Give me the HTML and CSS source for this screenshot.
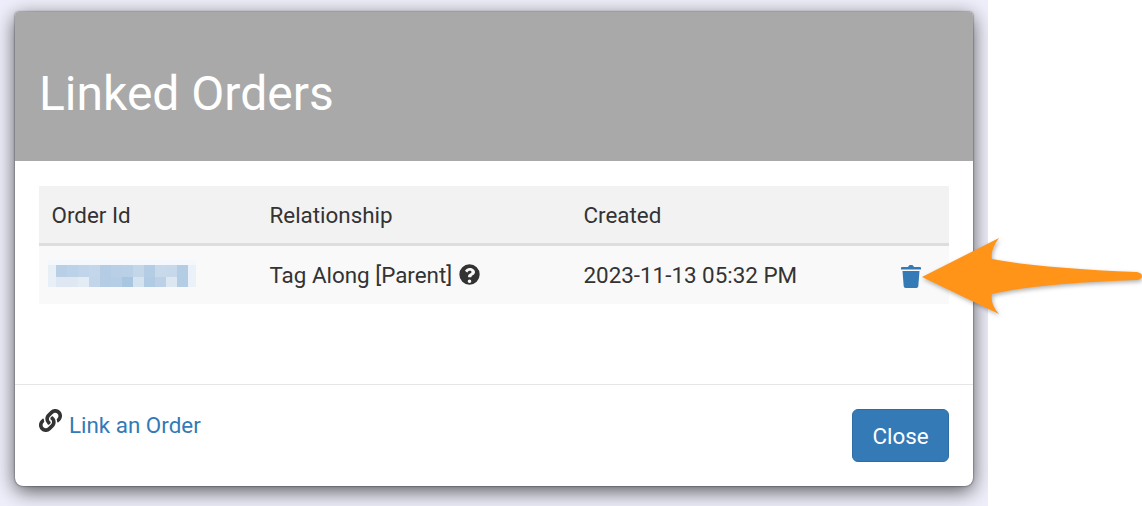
FILE: index.html
```html
<!DOCTYPE html>
<html lang="en">
<head>
  <meta charset="UTF-8" />
  <meta name="viewport" content="width=device-width, initial-scale=1.0"/>
  <title>Linked Orders</title>
  <link rel="stylesheet" href="styles.css">
</head>
<body>

<div class="backdrop">
  <div class="modal">
    <div class="modal-header">
      <h1>Linked Orders</h1>
    </div>

    <div class="modal-body">
      <table class="orders">
        <thead>
          <tr>
            <th class="col-id">Order Id</th>
            <th class="col-rel">Relationship</th>
            <th class="col-created">Created</th>
            <th class="col-action"></th>
          </tr>
        </thead>
        <tbody>
          <tr>
            <td>
              <!-- pixelated order number -->
              <svg class="redacted" viewBox="0 0 148 27" shape-rendering="crispEdges">
                <rect width="148" height="27" fill="#f4f7fb"/>
                <rect x="0" y="5" width="8" height="22" fill="#e8eff7"/>
                <rect x="140" y="5" width="8" height="22" fill="#ebf1f8"/>
                <rect x="8" y="5" width="11" height="12" fill="#b8cfe6"/>
                <rect x="19" y="5" width="11" height="12" fill="#bcd2e8"/>
                <rect x="30" y="5" width="11" height="12" fill="#c0d4ea"/>
                <rect x="41" y="5" width="11" height="12" fill="#c4d7ea"/>
                <rect x="52" y="5" width="11" height="12" fill="#b4cce4"/>
                <rect x="63" y="5" width="11" height="12" fill="#b8cfe6"/>
                <rect x="74" y="5" width="11" height="12" fill="#bad0e6"/>
                <rect x="85" y="5" width="11" height="12" fill="#c4d7e9"/>
                <rect x="96" y="5" width="11" height="12" fill="#b4cde5"/>
                <rect x="107" y="5" width="11" height="12" fill="#c8d9ea"/>
                <rect x="118" y="5" width="11" height="12" fill="#c6d8ea"/>
                <rect x="129" y="5" width="11" height="12" fill="#b4cde5"/>
                <rect x="8" y="17" width="11" height="10" fill="#dfe8f2"/>
                <rect x="19" y="17" width="11" height="10" fill="#dfe8f2"/>
                <rect x="30" y="17" width="11" height="10" fill="#e3ebf4"/>
                <rect x="41" y="17" width="11" height="10" fill="#c3d6e9"/>
                <rect x="52" y="17" width="11" height="10" fill="#b4cce4"/>
                <rect x="63" y="17" width="11" height="10" fill="#b6cee5"/>
                <rect x="74" y="17" width="11" height="10" fill="#a9c6e0"/>
                <rect x="85" y="17" width="11" height="10" fill="#d5e2ef"/>
                <rect x="96" y="17" width="11" height="10" fill="#b2cbe4"/>
                <rect x="107" y="17" width="11" height="10" fill="#bcd1e7"/>
                <rect x="118" y="17" width="11" height="10" fill="#dce7f1"/>
                <rect x="129" y="17" width="11" height="10" fill="#b4cde5"/>
              </svg>
            </td>
            <td>
              Tag Along [Parent]
              <svg class="help-icon" viewBox="0 0 512 512"><path fill-rule="evenodd" d="M256 8a248 248 0 1 0 0 496 248 248 0 0 0 0-496zm0 368a44 44 0 1 1 0 88 44 44 0 0 1 0-88zM262 96c-52 0-86 22-112 61-4 5-2 12 3 16l38 29c5 4 13 3 17-2 17-21 29-34 54-34 20 0 44 13 44 32 0 14-12 22-32 33-23 13-54 30-54 71v8c0 7 5 12 12 12h62c7 0 12-5 12-12v-5c0-29 84-30 84-108 0-59-61-101-128-101z"/></svg>
            </td>
            <td>2023-11-13 05:32 PM</td>
            <td class="action-cell">
              <svg class="trash-icon" viewBox="0 0 20 23"><path d="M7 2 8 .5Q8.3 0 9 0h2q.7 0 1 .5L13 2h6a1 1 0 0 1 1 1v1.5H0V3a1 1 0 0 1 1-1zM1.5 6h17l-1.2 15.2a2 2 0 0 1-2 1.8H4.7a2 2 0 0 1-2-1.8z"/></svg>
            </td>
          </tr>
        </tbody>
      </table>
    </div>

    <div class="modal-footer">
      <div class="link-order">
        <svg class="link-icon" viewBox="0 0 512 512"><path d="M326 186c60 60 59 156 0 215l-67 67c-59 59-156 59-215 0-59-59-59-156 0-215l37-37c10-10 27-3 27 10 1 17 4 34 10 50 2 6 0 12-4 16l-13 13c-28 28-29 74-1 102 28 29 74 29 103 1l67-67c28-28 28-74 0-102-4-4-7-6-10-8-5-3-8-9-8-14 0-11 3-23 12-31l21-21c6-6 14-6 20-2 8 5 15 11 21 23zM468 44c-59-59-156-59-215 0l-67 67-0 0c-59 59-60 155 0 215 6 12 13 18 21 23 6 4 14 4 20-2l21-21c9-8 12-20 12-31 0-5-3-11-8-14-3-2-6-4-10-8-28-28-28-74 0-102l67-67c29-28 75-28 103 1 28 28 27 74-1 102l-13 13c-4 4-6 10-4 16 6 16 9 33 10 50 0 13 17 20 27 10l37-37c59-59 59-156 0-215z"/></svg>
        <a href="#">Link an Order</a>
      </div>
      <button type="button" class="close-btn">Close</button>
    </div>
  </div>

  <!-- callout pointing at the delete icon -->
  <svg class="arrow" viewBox="0 0 1142 506">
    <path d="M922 277 999 238Q990 250 992 259 1040 268 1137 272 1142 273 1142 276 1142 279 1137 280 1040 283 992 294 990 304 999 314Z"/>
  </svg>
</div>

</body>
</html>
```

FILE: styles.css
```css
* {
  margin: 0;
  padding: 0;
  box-sizing: border-box;
  font-family: Roboto, sans-serif;
}

body {
  background: #fff;
  height: 506px;
  overflow: hidden;
}

.backdrop {
  width: 988px;
  height: 506px;
  padding: 12px 15px 20px;
  background: #eeeffa;
  overflow: hidden;
}

.modal {
  width: 958px;
  height: 474px;
  background: #fff;
  border-radius: 4px 4px 8px 8px;
  overflow: hidden;
  display: flex;
  flex-direction: column;
  box-shadow: 0 0 2px rgba(0,0,0,0.7), 0 5px 20px rgba(0,0,0,0.65);
}

.modal-header {
  height: 149px;
  flex-shrink: 0;
  background: #a9a9a9;
  padding: 54px 24px 0;
}

.modal-header h1 {
  color: #fff;
  font-size: 48px;
  font-weight: 400;
  line-height: 55px;
}

.modal-body {
  height: 224px;
  flex-shrink: 0;
  padding: 25px 24px 0;
  border-bottom: 1px solid #e5e5e5;
}

.orders {
  width: 910px;
  border-collapse: collapse;
  table-layout: fixed;
  font-size: 22.4px;
  color: #333;
}

.orders th {
  height: 58px;
  padding: 2px 12.5px 0;
  background: #f2f2f2;
  border-bottom: 3px solid #ddd;
  font-weight: 400;
  text-align: left;
}

.orders td {
  height: 60px;
  padding: 0 12.5px;
  background: #f9f9f9;
  white-space: nowrap;
}

.col-id { width: 218px; }
.col-rel { width: 314px; }
.col-created { width: 300px; }

.redacted {
  display: block;
  width: 148px;
  height: 27px;
  margin-left: -4px;
  margin-top: -2px;
}

.help-icon {
  width: 21px;
  height: 21px;
  margin-left: 1px;
  fill: #333;
  vertical-align: -2px;
}

.action-cell {
  text-align: right;
}

.orders td.action-cell {
  padding-right: 28px;
}

.trash-icon {
  width: 20px;
  height: 23px;
  fill: #337ab7;
  vertical-align: middle;
}

.modal-footer {
  flex: 1;
  padding: 24px 24px 0;
  display: flex;
  justify-content: space-between;
  align-items: flex-start;
}

.link-order {
  display: flex;
  align-items: flex-start;
  gap: 7px;
  font-size: 22.4px;
  line-height: 32px;
}

.link-icon {
  width: 23px;
  height: 23px;
  fill: #333;
}

.link-order a {
  color: #337ab7;
  text-decoration: none;
}

.close-btn {
  width: 97px;
  height: 53px;
  background: #337ab7;
  color: #fff;
  border: 1px solid #2e6da4;
  border-radius: 6px;
  font-size: 22.4px;
}

.arrow {
  position: absolute;
  left: 0;
  top: 0;
  width: 1142px;
  height: 506px;
  fill: #ff9419;
  filter: drop-shadow(1px 2px 2px rgba(0,0,0,0.3));
}
```
